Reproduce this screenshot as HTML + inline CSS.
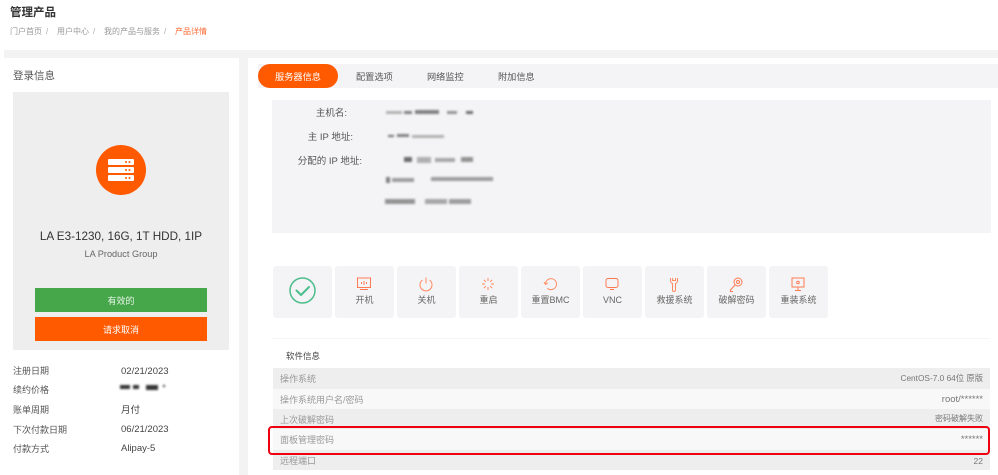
<!DOCTYPE html>
<html lang="zh"><head><meta charset="utf-8"><title>管理产品</title>
<style>
html,body{margin:0;padding:0}
body{width:998px;height:475px;overflow:hidden;background:#fff;position:relative;font-family:"Liberation Sans","Noto Sans CJK SC",sans-serif;color:#555}
#w{position:absolute;left:0;top:0;width:998px;height:475px;filter:blur(.3px)}
.a{position:absolute;white-space:nowrap}
.b{position:absolute;background:#333;filter:blur(1px)}
.btn{position:absolute;top:266px;width:59px;height:52px;background:#f4f4f6;border-radius:3px;text-align:center;font-size:9px;color:#666}
.btn svg{position:absolute;left:17px;top:11px}
.btn span{position:absolute;left:0;right:0;top:27px;line-height:14px}
.row{position:absolute;left:273px;width:717px;font-size:9px;line-height:20px;color:#999}
.row i{font-style:normal;position:absolute;left:7px;top:0}
.row b{font-weight:400;position:absolute;right:7px;top:0;color:#777}
.lab{left:13px;font-size:9px;line-height:14px;color:#555}
.val{left:121px;font-size:9.5px;line-height:14px;color:#444}
.tab{top:64px;font-size:9.2px;line-height:24px;color:#555}
.il{font-size:9.5px;line-height:14px;color:#555;text-align:right;width:100px;left:262px}
</style></head><body><div id="w">

<div class="a" style="left:10px;top:5px;font-size:11.500px;line-height:16px;color:#333;font-weight:700">管理产品</div>
<div class="a" style="left:10px;top:26px;font-size:8px;line-height:12px;color:#999">门户首页</div>
<div class="a" style="left:46px;top:26px;font-size:8px;line-height:12px;color:#aaa">/</div>
<div class="a" style="left:57px;top:26px;font-size:8px;line-height:12px;color:#999">用户中心</div>
<div class="a" style="left:93px;top:26px;font-size:8px;line-height:12px;color:#aaa">/</div>
<div class="a" style="left:104px;top:26px;font-size:8px;line-height:12px;color:#999">我的产品与服务</div>
<div class="a" style="left:164px;top:26px;font-size:8px;line-height:12px;color:#aaa">/</div>
<div class="a" style="left:175px;top:26px;font-size:8px;line-height:12px;color:#ff6a33">产品详情</div>

<div class="a" style="left:4px;top:50px;width:994px;height:425px;background:#f3f3f3"></div>
<div class="a" style="left:4px;top:58px;width:235px;height:417px;background:#fff"></div>
<div class="a" style="left:248px;top:58px;width:750px;height:417px;background:#fff"></div>

<div class="a" style="left:13px;top:68px;font-size:10.500px;line-height:16px;color:#555">登录信息</div>
<div class="a" style="left:13px;top:92px;width:216px;height:258px;background:#eee"></div>
<div class="a" style="left:96px;top:145px;width:50px;height:50px;border-radius:50%;background:#ff5a00"></div>
<svg class="a" style="left:108px;top:159px" width="26" height="23" viewBox="0 0 26 23">
<g fill="#fff"><rect y="0" width="26" height="6" rx="1"/><rect y="8" width="26" height="6" rx="1"/><rect y="16" width="26" height="6" rx="1"/></g>
<g fill="#ff5a00"><circle cx="18" cy="3" r="1"/><circle cx="21.500" cy="3" r="1"/><circle cx="18" cy="11" r="1"/><circle cx="21.500" cy="11" r="1"/><circle cx="18" cy="19" r="1"/><circle cx="21.500" cy="19" r="1"/></g></svg>
<div class="a" style="left:13px;width:216px;top:229px;text-align:center;font-size:11.700px;line-height:16px;color:#333">LA E3-1230, 16G, 1T HDD, 1IP</div>
<div class="a" style="left:13px;width:216px;top:247px;text-align:center;font-size:9.200px;line-height:14px;color:#666">LA Product Group</div>
<div class="a" style="left:35px;top:288px;width:172px;height:24px;background:#46a64a;color:#e8f5e8;font-size:9px;line-height:24px;text-align:center"><span style="position:relative;top:1px">有效的</span></div>
<div class="a" style="left:35px;top:317px;width:172px;height:24px;background:#ff5a00;color:#fff;font-size:9px;line-height:24px;text-align:center"><span style="position:relative;top:1px">请求取消</span></div>

<div class="a lab" style="top:364px">注册日期</div><div class="a val" style="top:365px">02/21/2023</div>
<div class="a lab" style="top:383px">续约价格</div>
<div class="b" style="left:120px;top:385px;width:10px;height:4px"></div><div class="b" style="left:133px;top:385px;width:6px;height:4px"></div><div class="b" style="left:146px;top:385px;width:12px;height:5px"></div><div class="b" style="left:163px;top:385px;width:2px;height:2px"></div>
<div class="a lab" style="top:403px">账单周期</div><div class="a val" style="top:404px">月付</div>
<div class="a lab" style="top:423px">下次付款日期</div><div class="a val" style="top:423px">06/21/2023</div>
<div class="a lab" style="top:442px">付款方式</div><div class="a val" style="top:442px">Alipay-5</div>

<div class="a" style="left:258px;top:64px;width:740px;height:24px;background:#f4f4f6"></div>
<div class="a" style="left:258px;top:64px;width:80px;height:24px;border-radius:12px;background:#ff5a00;color:#fff;font-size:9.200px;line-height:26px;text-align:center">服务器信息</div>
<div class="a tab" style="left:356px;top:65px">配置选项</div>
<div class="a tab" style="left:427px;top:65px">网络监控</div>
<div class="a tab" style="left:498px;top:65px">附加信息</div>

<div class="a" style="left:272px;top:100px;width:719px;height:133px;background:#f4f4f6"></div>
<div class="a il" style="top:107px;left:247px">主机名:</div>
<div class="a il" style="top:131px;left:253px">主 IP 地址:</div>
<div class="a il" style="top:155px">分配的 IP 地址:</div>
<div class="b" style="left:386px;top:111px;width:16px;height:3px;opacity:.35"></div><div class="b" style="left:404px;top:111px;width:8px;height:3px;opacity:.6"></div><div class="b" style="left:415px;top:110px;width:24px;height:4px;opacity:.6"></div><div class="b" style="left:447px;top:111px;width:10px;height:3px;opacity:.5"></div><div class="b" style="left:466px;top:111px;width:7px;height:3px;opacity:.7"></div>
<div class="b" style="left:388px;top:135px;width:6px;height:2px;opacity:.7"></div><div class="b" style="left:397px;top:134px;width:12px;height:3px;opacity:.6"></div><div class="b" style="left:412px;top:135px;width:32px;height:3px;opacity:.35"></div>
<div class="b" style="left:404px;top:157px;width:8px;height:5px;opacity:.7"></div><div class="b" style="left:417px;top:157px;width:14px;height:6px;opacity:.35"></div><div class="b" style="left:435px;top:158px;width:20px;height:4px;opacity:.4"></div><div class="b" style="left:461px;top:157px;width:12px;height:5px;opacity:.5"></div>
<div class="b" style="left:386px;top:177px;width:4px;height:6px;opacity:.6"></div><div class="b" style="left:392px;top:178px;width:22px;height:4px;opacity:.45"></div><div class="b" style="left:431px;top:177px;width:62px;height:4px;opacity:.45"></div>
<div class="b" style="left:385px;top:199px;width:30px;height:5px;opacity:.5"></div><div class="b" style="left:425px;top:199px;width:22px;height:5px;opacity:.4"></div><div class="b" style="left:449px;top:199px;width:22px;height:5px;opacity:.45"></div>

<div class="btn" style="left:273px"><svg style="left:16px;top:11px" width="27" height="27" viewBox="0 0 27 27" fill="none" stroke="#4cbd8b"><circle cx="13.500" cy="13.500" r="12.500" stroke-width="1.500"/><path d="M7.500 13.500l4.500 4.500 8-8" stroke-width="2" stroke-linecap="round" stroke-linejoin="round"/></svg></div>
<div class="btn" style="left:335px"><svg width="24" height="16" viewBox="0 0 24 16" fill="none" stroke="#ff7a50"><rect x="5.500" y="1" width="13" height="9.500" stroke-width="1"/><path d="M8 12.500h8M9.500 5v2M12 4v4M14.500 5v2" stroke-width="1"/></svg><span>开机</span></div>
<div class="btn" style="left:397px"><svg width="24" height="16" viewBox="0 0 24 16" fill="none" stroke="#ff8a60" stroke-width="1"><path d="M8.500 3a6 6 0 1 0 7 0M12 .5v6"/></svg><span>关机</span></div>
<div class="btn" style="left:459px"><svg width="24" height="16" viewBox="0 0 24 16" fill="none" stroke="#ff8a60" stroke-width="1"><path d="M12 1v3M12 10v3M6 7h3M15 7h3M7.800 2.800l2 2M14.200 9.200l2 2M16.200 2.800l-2 2M9.800 9.200l-2 2"/></svg><span>重启</span></div>
<div class="btn" style="left:521px"><svg width="24" height="16" viewBox="0 0 24 16" fill="none" stroke="#ff8a60" stroke-width="1"><path d="M7.500 7a5.500 5.500 0 1 1 1.800 4.200M6 5l1.500 2.500L10 6"/></svg><span>重置BMC</span></div>
<div class="btn" style="left:583px"><svg width="24" height="16" viewBox="0 0 24 16" fill="none" stroke="#ff7a50" stroke-width="1"><rect x="6" y="1.500" width="12" height="9" rx="2"/><path d="M10 12.500h4"/></svg><span>VNC</span></div>
<div class="btn" style="left:645px"><svg width="24" height="16" viewBox="0 0 24 16" fill="none" stroke="#ff8a60" stroke-width="1"><path d="M8.500 1v3a3 3 0 0 0 2 2.500V13a1.500 1.500 0 0 0 3 0V6.500a3 3 0 0 0 2-2.500V1M10.500 1v2.500h3V1"/></svg><span>救援系统</span></div>
<div class="btn" style="left:707px"><svg width="24" height="16" viewBox="0 0 24 16" fill="none" stroke="#ff7a50" stroke-width="1"><circle cx="14" cy="5" r="4"/><circle cx="14" cy="5" r="1.500"/><path d="M11 8l-4.500 5v1.500H9"/></svg><span>破解密码</span></div>
<div class="btn" style="left:769px"><svg width="24" height="16" viewBox="0 0 24 16" fill="none" stroke="#ff7a50" stroke-width="1"><rect x="6" y="1" width="12" height="9"/><circle cx="12" cy="5.500" r="1.300"/><path d="M12 10v3M9 13.500h6"/></svg><span>重装系统</span></div>

<div class="a" style="left:272px;top:338px;width:718px;height:1px;background:#f5f5f5"></div>
<div class="a" style="left:286px;top:350px;font-size:8.500px;line-height:13px;color:#444">软件信息</div>
<div class="row" style="top:368px;height:21px;background:#eee"><i style="top:1px">操作系统</i><b style="font-size:8.300px">CentOS-7.0 64位 原版</b></div>
<div class="row" style="top:389px;height:20px;background:#f8f8f8"><i style="top:1px">操作系统用户名/密码</i><b style="font-size:9.500px;top:1px">root/******</b></div>
<div class="row" style="top:409px;height:20px;background:#eee"><i style="top:1px">上次破解密码</i><b style="font-size:8px">密码破解失败</b></div>
<div class="row" style="top:429px;height:21px;background:#f8f8f8"><i style="top:1px">面板管理密码</i><b style="font-size:9.500px;top:1px">******</b></div>
<div class="row" style="top:450px;height:20px;background:#eee"><i style="top:1px">远程端口</i><b style="font-size:8.500px;top:1px">22</b></div>
<div class="a" style="left:268px;top:426px;width:718px;height:25px;border:2px solid #ee0010;border-radius:4px"></div>
</div></body></html>
